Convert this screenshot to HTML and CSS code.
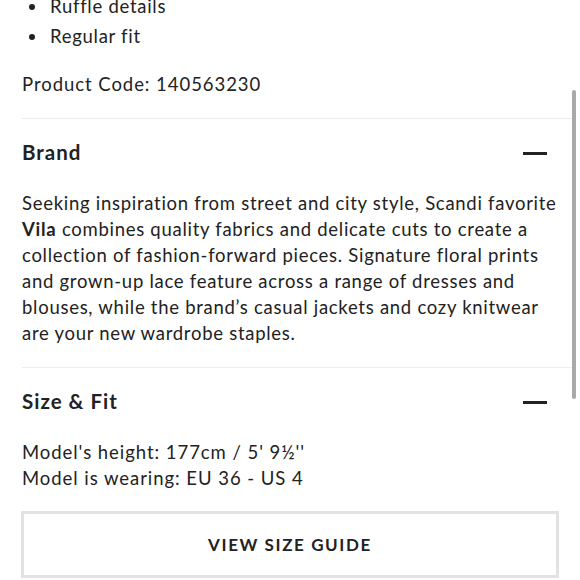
FILE: index.html
```html
<!DOCTYPE html>
<html>
<head>
<meta charset="utf-8">
<link rel="stylesheet" href="styles.css">
</head>
<body>
<div class="page">
  <ul class="features">
    <li>Ruffle details</li>
    <li>Regular fit</li>
  </ul>
  <p class="code">Product Code: 140563230</p>

  <section class="acc">
    <div class="acc-head">
      <h2>Brand</h2>
      <span class="minus"></span>
    </div>
    <p class="acc-body">Seeking inspiration from street and city style, Scandi favorite <b>Vila</b> combines quality fabrics and delicate cuts to create a collection of fashion-forward pieces. Signature floral prints and grown-up lace feature across a range of dresses and blouses, while the brand’s casual jackets and cozy knitwear are your new wardrobe staples.</p>
  </section>

  <section class="acc">
    <div class="acc-head">
      <h2>Size &amp; Fit</h2>
      <span class="minus"></span>
    </div>
    <p class="acc-body fit">Model's height: 177cm / 5' 9½''<br>Model is wearing: EU 36 - US 4</p>
    <button class="guide">VIEW SIZE GUIDE</button>
  </section>
</div>
<div class="scrollbar"></div>
</body>
</html>
```
FILE: styles.css
```css
html, body {
  margin: 0;
  padding: 0;
  background: #fff;
  overflow: hidden;
}
body {
  font-family: "Lato", "Liberation Sans", sans-serif;
  color: #222;
  font-size: 18.5px;
  letter-spacing: 0.72px;
  height: 580px;
}
.page {
  padding: 0 8px 0 22px;
}
.features {
  list-style: none;
  margin: -9px 0 0;
  padding: 0;
}
.features li {
  line-height: 30px;
  padding-left: 28px;
  position: relative;
}
.features li::before {
  content: "";
  position: absolute;
  left: 7px;
  top: 13px;
  width: 6px;
  height: 6px;
  border-radius: 50%;
  background: #222;
}
.code {
  margin: 0;
  padding: 21px 0 22px;
  line-height: 24px;
  letter-spacing: 0.95px;
}
.acc {
  border-top: 1px solid #ececec;
}
.acc-head {
  display: flex;
  align-items: flex-start;
  justify-content: space-between;
  box-sizing: border-box;
  height: 71px;
  padding: 22px 25px 0 0;
}
.acc-head h2 {
  margin: 0;
  font-size: 20.5px;
  line-height: 23px;
  font-weight: 700;
  letter-spacing: 1px;
}
.minus {
  display: block;
  width: 24px;
  height: 2.5px;
  margin-top: 11px;
  background: #222;
}
.acc-body {
  margin: 0;
  padding: 0 12px 21px 0;
  line-height: 26px;
}
.acc-body b {
  font-weight: 700;
}
.fit {
  letter-spacing: 0.95px;
  padding-bottom: 20px;
}
.guide {
  display: block;
  width: 538px;
  height: 67px;
  margin: 0 0 0 -1px;
  background: #fff;
  border: 3px solid #e2e2e2;
  font-family: inherit;
  font-size: 17px;
  font-weight: 700;
  letter-spacing: 1.6px;
  color: #222;
}
.scrollbar {
  position: absolute;
  left: 572px;
  top: 90px;
  width: 4px;
  height: 309px;
  border-radius: 2px;
  background: #a9a9a9;
}
```
